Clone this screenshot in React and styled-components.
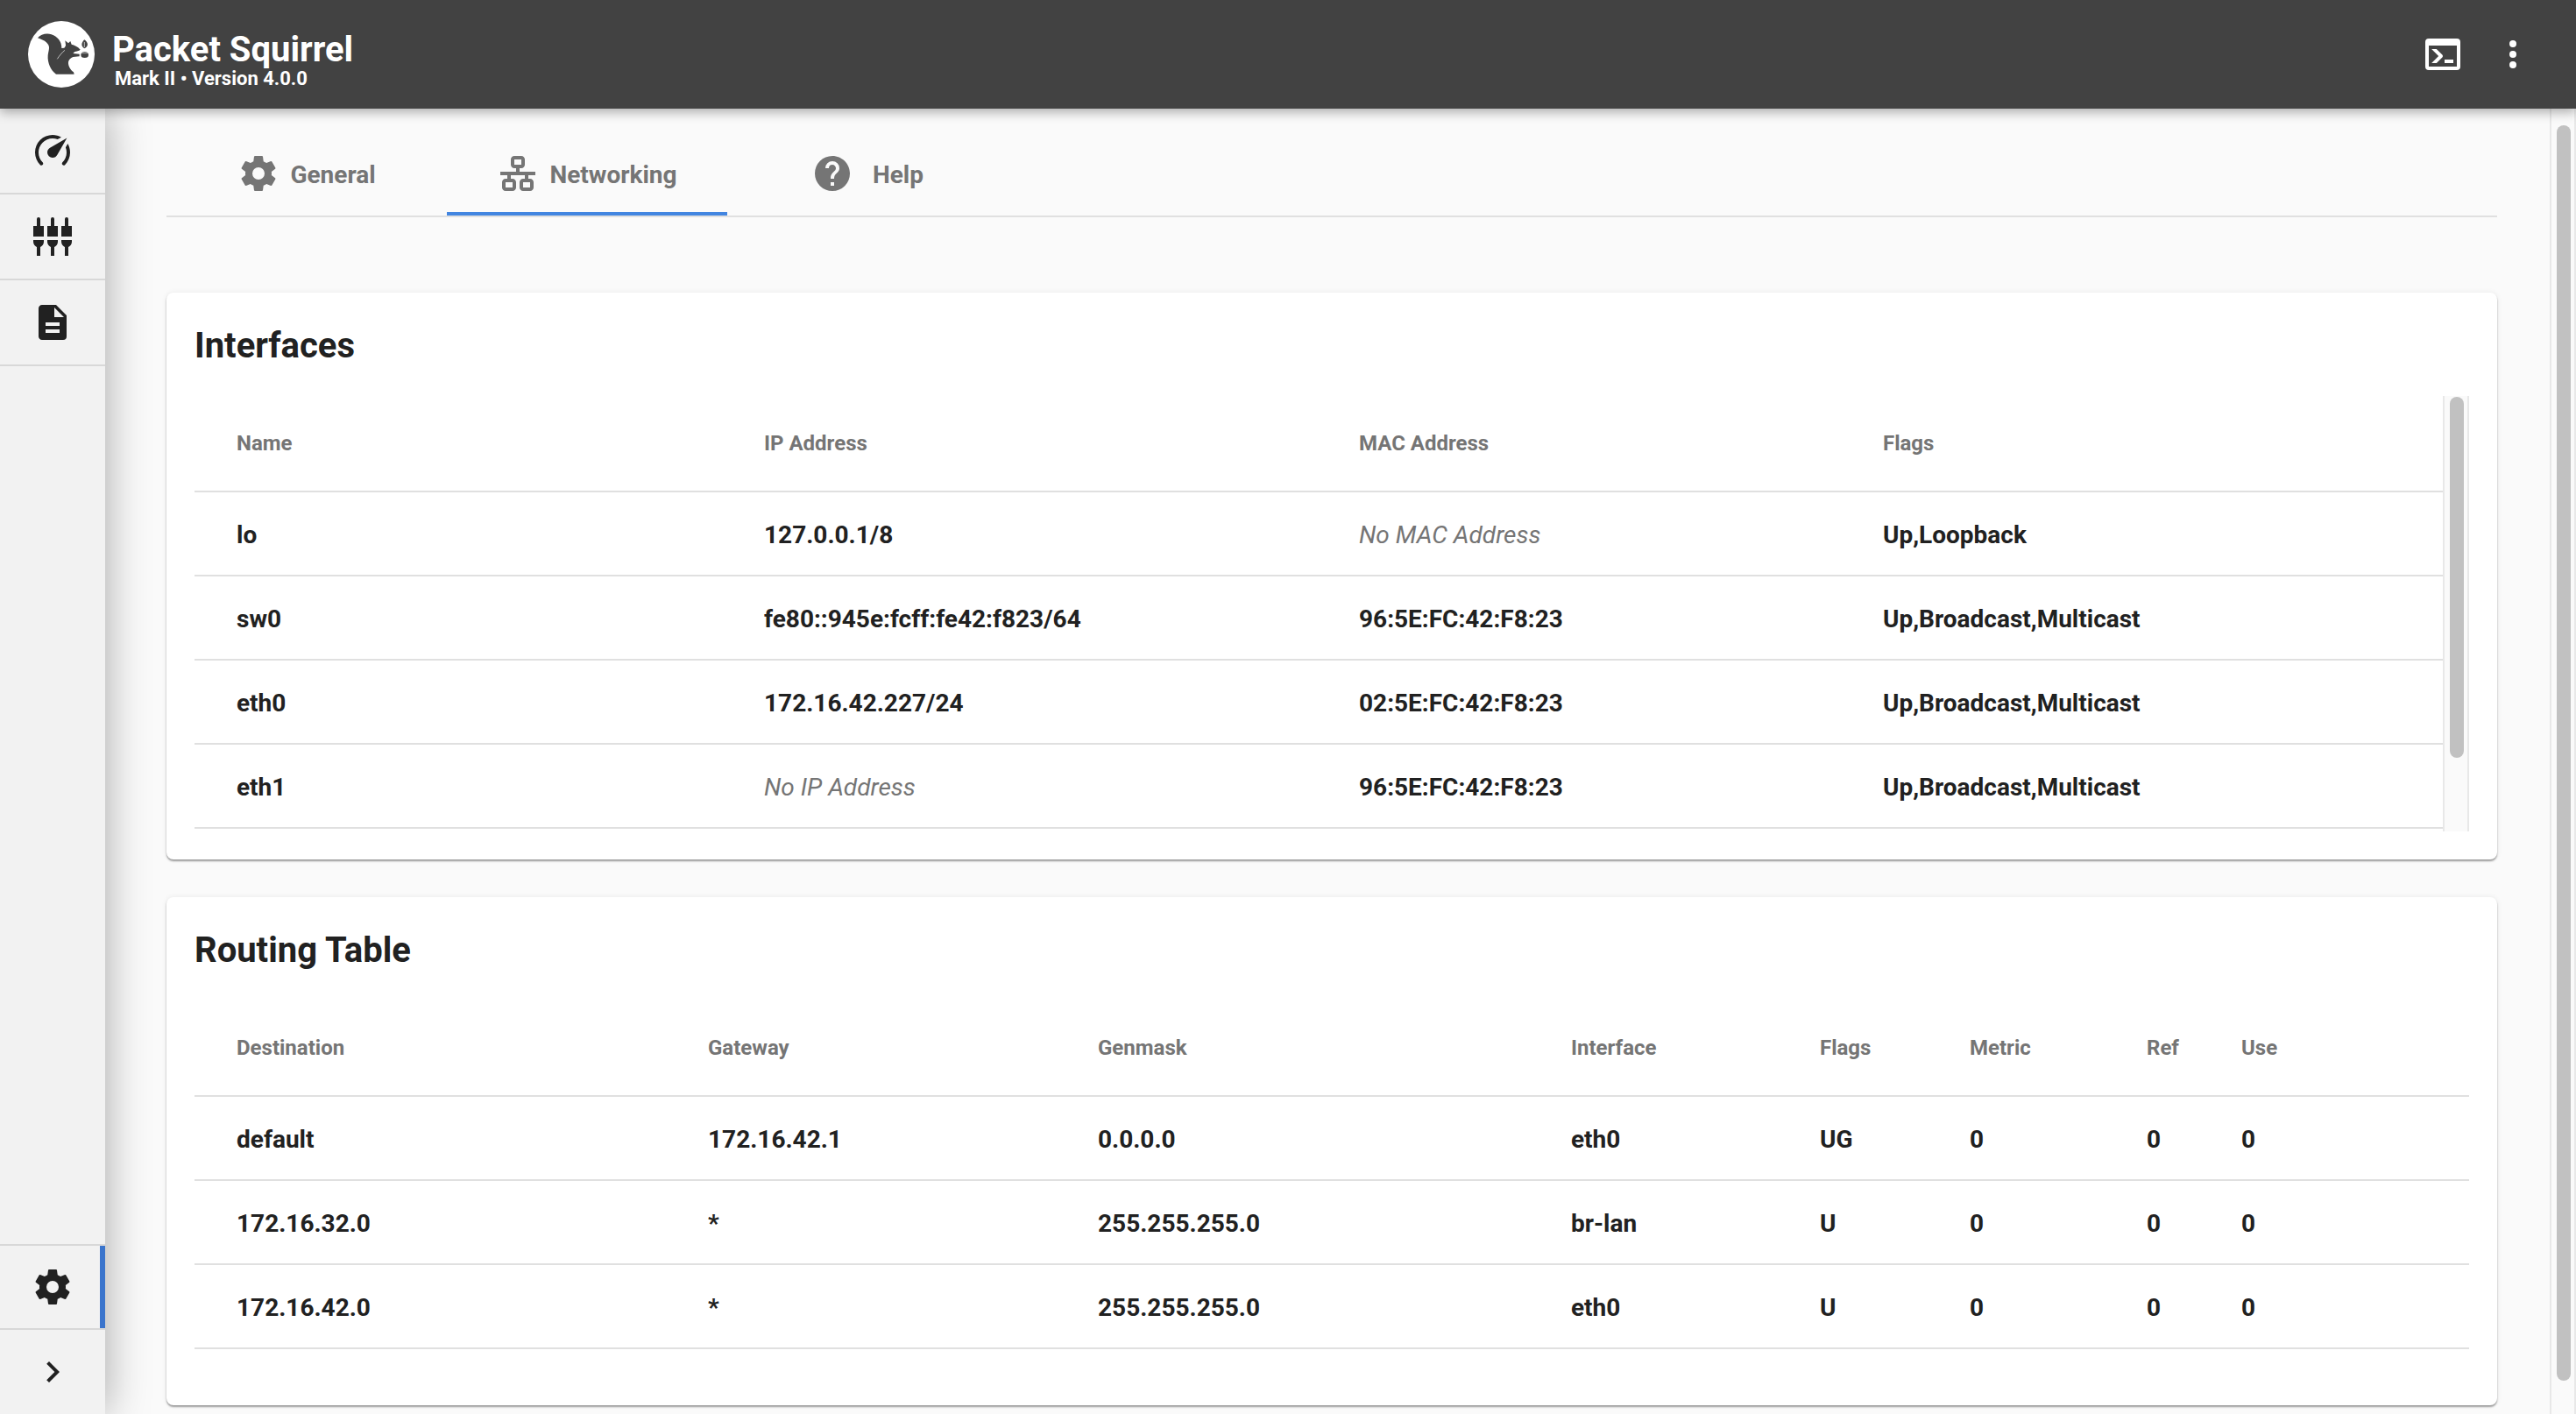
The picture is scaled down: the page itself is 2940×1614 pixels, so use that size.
import React from "react";
import styled, { createGlobalStyle } from "styled-components";

const GlobalStyle = createGlobalStyle`
  html, body, #root {
    height: 100%;
    margin: 0;
  }
  body {
    font-family: Roboto, "Liberation Sans", sans-serif;
    background: #fafafa;
    color: #212121;
    overflow: hidden;
  }
`;

const Shell = styled.div`
  display: flex;
  flex-direction: column;
  height: 1614px;
`;
const Header = styled.header`
  position: relative;
  z-index: 3;
  flex: 0 0 124px;
  display: flex;
  align-items: center;
  padding: 0 32px;
  background: #424242;
  color: #fff;
  box-shadow: 0 4px 12px rgba(0, 0, 0, 0.32);
`;
const Logo = styled.svg`
  width: 76px;
  height: 76px;
  margin-right: 20px;
`;
const Brand = styled.div`
  flex: 1;
  display: flex;
  flex-direction: column;
  padding-top: 13px;
`;
const BrandName = styled.div`
  font-size: 40px;
  line-height: 44px;
  font-weight: 700;
`;
const BrandVersion = styled.div`
  font-size: 22px;
  line-height: 24px;
  font-weight: 700;
  margin: -1px 0 0 3px;
`;
const HeaderButton = styled.div`
  width: 80px;
  display: flex;
  justify-content: center;
`;

const Body = styled.div`
  flex: 1;
  display: flex;
  min-height: 0;
`;
const Sidebar = styled.nav`
  position: relative;
  z-index: 2;
  flex: 0 0 120px;
  display: flex;
  flex-direction: column;
  justify-content: space-between;
  background: #f2f2f2;
  color: #212121;
  box-shadow: 0 0 50px rgba(0, 0, 0, 0.34);
`;
const SideGroup = styled.div`
  display: flex;
  flex-direction: column;
`;
const SideItem = styled.div`
  height: ${(p) => (p.$last ? "96px" : "98px")};
  box-sizing: border-box;
  display: flex;
  align-items: center;
  justify-content: center;
  border-top: ${(p) => (p.$top ? "2px solid #d8d8d8" : "none")};
  border-bottom: ${(p) => (p.$last ? "none" : "2px solid #d8d8d8")};
  box-shadow: ${(p) => (p.$active ? "inset -6px 0 0 #3a74cc" : "none")};
`;

const Main = styled.main`
  flex: 1;
  min-width: 0;
  display: flex;
`;
const Content = styled.div`
  flex: 1;
  min-width: 0;
  overflow: hidden;
  padding: 26px 60px 0 70px;
`;
// the browser hides real scrollbars here, so track and thumb are plain elements
const ScrollTrack = styled.div`
  flex: 0 0 30px;
  box-sizing: border-box;
  padding-top: ${(p) => p.$top}px;
  background: #fafafa;
  border-left: 2px solid #e8e8e8;
  border-right: 2px solid #e8e8e8;
`;
const ScrollThumb = styled.div`
  width: 16px;
  height: ${(p) => p.$h}px;
  margin-left: 6px;
  border-radius: 8px;
  background: #c1c1c1;
`;
const TabBar = styled.div`
  display: flex;
  border-bottom: 2px solid #e0e0e0;
  margin-bottom: 86px;
`;
const Tab = styled.div`
  width: 320px;
  height: 96px;
  box-sizing: border-box;
  display: flex;
  align-items: center;
  justify-content: center;
  gap: ${(p) => p.$gap || 12}px;
  color: #757575;
  font-size: 28px;
  font-weight: 700;
  border-top: 4px solid transparent;
  border-bottom: 4px solid ${(p) => (p.$active ? "#4285e0" : "transparent")};
`;
const TabLabel = styled.span`
  padding-top: 2px;
`;
const Card = styled.section`
  background: #fff;
  border-radius: 8px;
  padding: 0 32px ${(p) => p.$bottom}px;
  margin-bottom: 43px;
  box-shadow: 0 2px 2px rgba(0, 0, 0, 0.36), 0 0 6px rgba(0, 0, 0, 0.07);
`;
const CardTitle = styled.h2`
  margin: 0;
  height: 118px;
  box-sizing: border-box;
  padding-top: 2px;
  display: flex;
  align-items: center;
  font-size: 40px;
  font-weight: 700;
  color: #212121;
`;
const TableFrame = styled.div`
  display: flex;
  height: 497px;
`;
const TableClip = styled.div`
  flex: 1;
  min-width: 0;
  overflow: hidden;
`;
const Table = styled.table`
  width: 100%;
  table-layout: fixed;
  border-collapse: collapse;
`;
const Th = styled.th`
  width: ${(p) => p.$w}px;
  height: 109px;
  box-sizing: border-box;
  padding: 0 0 0 48px;
  text-align: left;
  font-size: 24px;
  font-weight: 700;
  color: #757575;
  border-bottom: 2px solid #e0e0e0;
`;
const Td = styled.td`
  height: 96px;
  box-sizing: border-box;
  padding: 2px 0 0 48px;
  font-size: 28px;
  font-weight: ${(p) => (p.$empty ? 400 : 700)};
  font-style: ${(p) => (p.$empty ? "italic" : "normal")};
  color: ${(p) => (p.$empty ? "#757575" : "#212121")};
  border-bottom: 2px solid #e0e0e0;
  white-space: nowrap;
`;

const MdiIcon = ({ d, size = 48 }) => (
  <svg width={size} height={size} viewBox="0 0 24 24" fill="currentColor">
    <path d={d} fillRule="evenodd" />
  </svg>
);

const paths = {
  speedometer:
    "M12,16A3,3 0 0,1 9,13C9,11.88 9.61,10.9 10.5,10.39L20.21,4.77L14.68,14.35C14.18,15.33 13.17,16 12,16M12,3C13.81,3 15.5,3.5 16.97,4.32L14.87,5.53C14,5.19 13,5 12,5A8,8 0 0,0 4,13C4,15.21 4.89,17.21 6.34,18.65H6.35C6.74,19.04 6.74,19.67 6.35,20.06C5.96,20.45 5.32,20.45 4.93,20.07C3.12,18.26 2,15.76 2,13A10,10 0 0,1 12,3M22,13C22,15.76 20.88,18.26 19.07,20.07C18.68,20.45 18.05,20.45 17.66,20.06C17.27,19.67 17.27,19.04 17.66,18.65C19.11,17.2 20,15.21 20,13C20,12 19.81,11 19.46,10.1L20.67,8C21.5,9.5 22,11.18 22,13Z",
  file:
    "M6,2H14L20,8V20A2,2 0 0,1 18,22H6C4.89,22 4,21.1 4,20V4C4,2.89 4.89,2 6,2M13,3.5V9H18.5L13,3.5M8,12V14H16V12H8M8,16V18H16V16H8Z",
  cog:
    "M12,15.5A3.5,3.5 0 0,1 8.5,12A3.5,3.5 0 0,1 12,8.5A3.5,3.5 0 0,1 15.5,12A3.5,3.5 0 0,1 12,15.5M19.43,12.97C19.47,12.65 19.5,12.33 19.5,12C19.5,11.67 19.47,11.34 19.43,11L21.54,9.37C21.73,9.22 21.78,8.95 21.66,8.73L19.66,5.27C19.54,5.05 19.27,4.96 19.05,5.05L16.56,6.05C16.04,5.66 15.5,5.32 14.87,5.07L14.5,2.42C14.46,2.18 14.25,2 14,2H10C9.75,2 9.54,2.18 9.5,2.42L9.13,5.07C8.5,5.32 7.96,5.66 7.44,6.05L4.95,5.05C4.73,4.96 4.46,5.05 4.34,5.27L2.34,8.73C2.21,8.95 2.27,9.22 2.46,9.37L4.57,11C4.53,11.34 4.5,11.67 4.5,12C4.5,12.33 4.53,12.65 4.57,12.97L2.46,14.63C2.27,14.78 2.21,15.05 2.34,15.27L4.34,18.73C4.46,18.95 4.73,19.03 4.95,18.95L7.44,17.94C7.96,18.34 8.5,18.68 9.13,18.93L9.5,21.58C9.54,21.82 9.75,22 10,22H14C14.25,22 14.46,21.82 14.5,21.58L14.87,18.93C15.5,18.67 16.04,18.34 16.56,17.94L19.05,18.95C19.27,19.03 19.54,18.95 19.66,18.73L21.66,15.27C21.78,15.05 21.73,14.78 21.54,14.63L19.43,12.97Z",
  chevron: "M8.59,16.58L13.17,12L8.59,7.41L10,6L16,12L10,18L8.59,16.58Z",
  console:
    "M20,19V7H4V19H20M20,3A2,2 0 0,1 22,5V19A2,2 0 0,1 20,21H4A2,2 0 0,1 2,19V5A2,2 0 0,1 4,3H20M13,17V15H18V17H13M9.58,13L5.57,9H8.4L11.7,12.3C12.09,12.69 12.09,13.33 11.7,13.72L8.42,17H5.59L9.58,13Z",
  dots:
    "M12,16A2,2 0 0,1 14,18A2,2 0 0,1 12,20A2,2 0 0,1 10,18A2,2 0 0,1 12,16M12,10A2,2 0 0,1 14,12A2,2 0 0,1 12,14A2,2 0 0,1 10,12A2,2 0 0,1 12,10M12,4A2,2 0 0,1 14,6A2,2 0 0,1 12,8A2,2 0 0,1 10,6A2,2 0 0,1 12,4Z",
  lan:
    "M10,2C8.89,2 8,2.89 8,4V7C8,8.11 8.89,9 10,9H11V11H2V13H6V15H5C3.89,15 3,15.89 3,17V20C3,21.11 3.89,22 5,22H9C10.11,22 11,21.11 11,20V17C11,15.89 10.11,15 9,15H8V13H16V15H15C13.89,15 13,15.89 13,17V20C13,21.11 13.89,22 15,22H19C20.11,22 21,21.11 21,20V17C21,15.89 20.11,15 19,15H18V13H22V11H13V9H14C15.11,9 16,8.11 16,7V4C16,2.89 15.11,2 14,2H10M10,4H14V7H10V4M5,17H9V20H5V17M15,17H19V20H15V17Z",
  help:
    "M15.07,11.25L14.17,12.17C13.45,12.89 13,13.5 13,15H11V14.5C11,13.39 11.45,12.39 12.17,11.67L13.41,10.41C13.78,10.05 14,9.55 14,9C14,7.89 13.1,7 12,7A2,2 0 0,0 10,9H8A4,4 0 0,1 12,5A4,4 0 0,1 16,9C16,9.88 15.64,10.67 15.07,11.25M13,19H11V17H13M12,2A10,10 0 0,0 2,12A10,10 0 0,0 12,22A10,10 0 0,0 22,12C22,6.47 17.5,2 12,2Z",
};

// three rca plugs, drawn on a 48 box
const PlugsIcon = () => (
  <svg width="48" height="48" viewBox="0 0 48 48" fill="currentColor">
    {[8, 24, 40].map((c) => (
      <path
        key={c}
        d={`M${c - 2} 12V4a2 2 0 0 1 4 0V12H${c + 6}V24H${c - 6}V12ZM${c - 6} 28H${c + 6}V30C${c + 6} 33 ${c + 4} 35 ${c + 2} 36V46H${c - 2}V36C${c - 4} 35 ${c - 6} 33 ${c - 6} 30Z`}
      />
    ))}
  </svg>
);

const SquirrelLogo = () => (
  <Logo viewBox="0 0 76 76">
    <circle cx="38" cy="38" r="38" fill="#fff" />
    <g transform="translate(-4 -4) scale(0.3333)" fill="#424242">
      <path d="M45 70C55 58 75 52 92 58C112 65 128 82 127 105L136 104C139 100 141 98 141 94L139 79L150 88L157 81L161 92C170 94 182 99 191 110C186 115 178 115 172 117L166 123L188 125L188 133L166 135C158 138 152 144 150 152C149 165 156 178 168 187L170 194L108 194C90 182 78 155 80 130C82 110 90 100 76 86C68 78 55 74 45 70Z" />
      <path d="M112 142C120 130 128 120 138 112" stroke="#fff" strokeWidth="2" fill="none" />
      <ellipse cx="206" cy="128" rx="13" ry="10" />
      <path d="M205 76C216 84 222 96 206 106C192 100 194 86 205 76Z" />
      <path d="M205 84V102" stroke="#fff" strokeWidth="2" fill="none" />
      <path d="M192 122H220" stroke="#fff" strokeWidth="1.5" fill="none" />
    </g>
  </Logo>
);

const interfaceCols = [
  { label: "Name", w: 602 },
  { label: "IP Address", w: 679 },
  { label: "MAC Address", w: 598 },
  { label: "Flags", w: 687 },
];
const interfaces = [
  ["lo", "127.0.0.1/8", null, "Up,Loopback"],
  ["sw0", "fe80::945e:fcff:fe42:f823/64", "96:5E:FC:42:F8:23", "Up,Broadcast,Multicast"],
  ["eth0", "172.16.42.227/24", "02:5E:FC:42:F8:23", "Up,Broadcast,Multicast"],
  ["eth1", null, "96:5E:FC:42:F8:23", "Up,Broadcast,Multicast"],
];
const routeCols = [
  { label: "Destination", w: 538 },
  { label: "Gateway", w: 445 },
  { label: "Genmask", w: 540 },
  { label: "Interface", w: 284 },
  { label: "Flags", w: 171 },
  { label: "Metric", w: 202 },
  { label: "Ref", w: 108 },
  { label: "Use", w: 308 },
];
const routes = [
  ["default", "172.16.42.1", "0.0.0.0", "eth0", "UG", "0", "0", "0"],
  ["172.16.32.0", "*", "255.255.255.0", "br-lan", "U", "0", "0", "0"],
  ["172.16.42.0", "*", "255.255.255.0", "eth0", "U", "0", "0", "0"],
];

const DataTable = ({ cols, rows }) => (
  <Table>
    <thead>
      <tr>
        {cols.map((c) => (
          <Th key={c.label} $w={c.w}>
            {c.label}
          </Th>
        ))}
      </tr>
    </thead>
    <tbody>
      {rows.map((row) => (
        <tr key={row[0]}>
          {row.map((value, i) =>
            value === null ? (
              <Td key={i} $empty>
                {cols[i].label === "IP Address" ? "No IP Address" : "No MAC Address"}
              </Td>
            ) : (
              <Td key={i}>{value}</Td>
            )
          )}
        </tr>
      ))}
    </tbody>
  </Table>
);

export default function App() {
  return (
    <Shell>
      <GlobalStyle />
      <Header>
        <SquirrelLogo />
        <Brand>
          <BrandName>Packet Squirrel</BrandName>
          <BrandVersion>Mark II • Version 4.0.0</BrandVersion>
        </Brand>
        <HeaderButton>
          <MdiIcon d={paths.console} />
        </HeaderButton>
        <HeaderButton>
          <MdiIcon d={paths.dots} />
        </HeaderButton>
      </Header>
      <Body>
        <Sidebar>
          <SideGroup>
            <SideItem>
              <MdiIcon d={paths.speedometer} />
            </SideItem>
            <SideItem>
              <PlugsIcon />
            </SideItem>
            <SideItem>
              <MdiIcon d={paths.file} />
            </SideItem>
          </SideGroup>
          <SideGroup>
            <SideItem $top $active>
              <MdiIcon d={paths.cog} />
            </SideItem>
            <SideItem $last>
              <MdiIcon d={paths.chevron} />
            </SideItem>
          </SideGroup>
        </Sidebar>
        <Main>
          <Content>
            <TabBar>
              <Tab>
                <MdiIcon d={paths.cog} />
                <TabLabel>General</TabLabel>
              </Tab>
              <Tab $active>
                <MdiIcon d={paths.lan} />
                <TabLabel>Networking</TabLabel>
              </Tab>
              <Tab $gap={22}>
                <MdiIcon d={paths.help} />
                <TabLabel>Help</TabLabel>
              </Tab>
            </TabBar>
            <Card $bottom={32}>
              <CardTitle>Interfaces</CardTitle>
              <TableFrame>
                <TableClip>
                  <DataTable cols={interfaceCols} rows={interfaces} />
                </TableClip>
                <ScrollTrack $top={1}>
                  <ScrollThumb $h={412} />
                </ScrollTrack>
              </TableFrame>
            </Card>
            <Card $bottom={64}>
              <CardTitle>Routing Table</CardTitle>
              <DataTable cols={routeCols} rows={routes} />
            </Card>
          </Content>
          <ScrollTrack $top={19}>
            <ScrollThumb $h={1433} />
          </ScrollTrack>
        </Main>
      </Body>
    </Shell>
  );
}
